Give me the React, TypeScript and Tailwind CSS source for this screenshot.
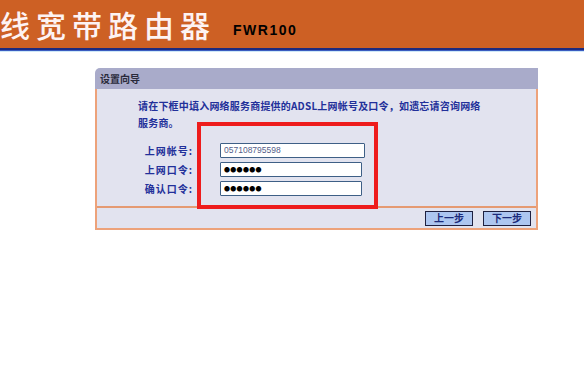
export default function App() {
  const cjk = { fontFamily: '"Noto Sans CJK SC", "Noto Sans", sans-serif' };
  return (
    <div className="w-[584px] h-[375px] bg-white overflow-hidden" style={cjk}>
      <header className="h-[48px] bg-[#cd6024] flex items-center">
        <span className="text-[30px] leading-none tracking-[6px] text-[#fdf3f3] font-medium">线宽带路由器</span>
        <span
          className="ml-[17px] mt-[11px] text-[14px] leading-none font-bold tracking-[1.5px] text-black"
          style={{ fontFamily: '"Liberation Sans", Arial, sans-serif' }}
        >
          FWR100
        </span>
      </header>
      <div className="h-[2px] bg-[#1c2a7e]" />
      <div className="h-[1px] bg-[#3a5cc0]" />
      <div className="h-[1px] bg-[#cfe8f8]" />

      <div className="ml-[95px] mt-[16px] w-[443px]">
        <div className="h-[21px] bg-[#a9abca] rounded-tl-[5px] flex items-center pl-[5px] text-[10px] font-bold text-[#2a2a3a]">
          设置向导
        </div>
        <div className="relative border-x-2 border-b-2 border-[#eda27a] bg-[#e2e3ef]">
          <div className="h-[119px] border-b-2 border-[#e59a72]">
            <p className="pl-[41px] pt-[8px] text-[10px] leading-[17px] font-bold tracking-[0.2px] text-[#22309a]">
              请在下框中填入网络服务商提供的ADSL上网帐号及口令，如遗忘请咨询网络
              <br />
              服务商。
            </p>
            <div className="mt-[12px] grid grid-cols-[96px_auto] gap-x-[27px] gap-y-[4px] items-center text-[10px] font-bold tracking-[1px] text-[#22309a]">
              <span className="text-right">上网帐号:</span>
              <div className="w-[145px] h-[15px] bg-white border border-[#3e5f86] rounded-[1px] flex items-center pl-[3px] text-[8.5px] font-normal tracking-normal text-[#54608a]" style={{ fontFamily: '"Liberation Sans", Arial, sans-serif' }}>
                057108795598
              </div>
              <span className="text-right">上网口令:</span>
              <div className="w-[142px] h-[15px] bg-white border border-[#3e5f86] rounded-[1px] flex items-center pl-[3px] text-[6px] text-black tracking-[0.3px]">
                ●●●●●●
              </div>
              <span className="text-right">确认口令:</span>
              <div className="w-[142px] h-[15px] bg-white border border-[#3e5f86] rounded-[1px] flex items-center pl-[3px] text-[6px] text-black tracking-[0.3px]">
                ●●●●●●
              </div>
            </div>
          </div>
          <div className="h-[20px] flex items-center justify-end gap-[10px] pr-[5px]">
            <button className="w-[48px] h-[15px] bg-[#adc6f0] border border-[#1e2040] text-[10px] leading-none font-bold text-[#1c2a7a] flex items-center justify-center">
              上一步
            </button>
            <button className="w-[48px] h-[15px] bg-[#adc6f0] border border-[#1e2040] text-[10px] leading-none font-bold text-[#1c2a7a] flex items-center justify-center">
              下一步
            </button>
          </div>
          <div className="absolute left-[100px] top-[33px] w-[181px] h-[87px] border-[4px] border-[#ee1c1c] pointer-events-none" />
        </div>
      </div>
    </div>
  );
}
